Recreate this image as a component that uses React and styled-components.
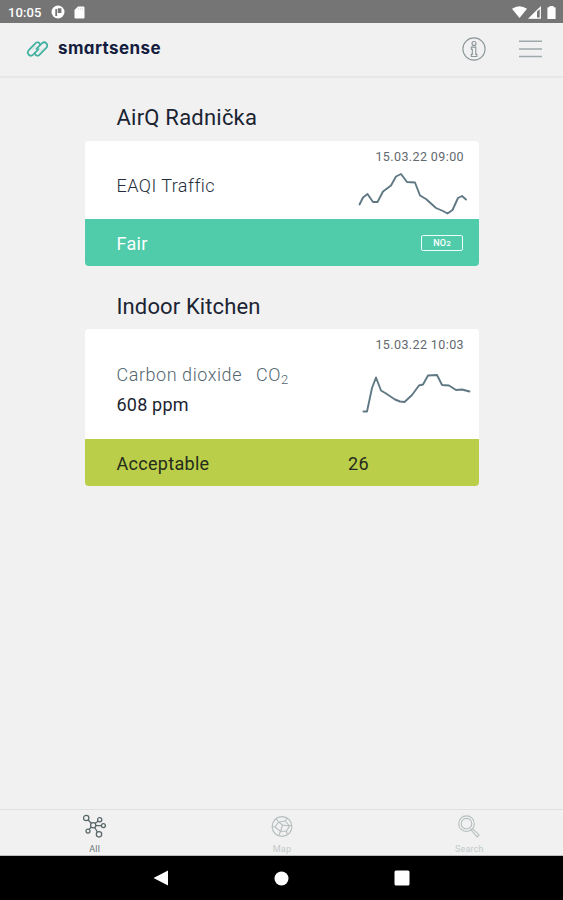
import React from "react";
import styled, { createGlobalStyle } from "styled-components";

const GlobalStyle = createGlobalStyle`
  * {
    box-sizing: border-box;
    margin: 0;
    padding: 0;
  }

  body {
    background-color: #f1f1f1;
    font-family: Roboto, "Liberation Sans", sans-serif;
    color: #1b2432;
  }
`;

const Screen = styled.div`
  display: flex;
  flex-direction: column;
  width: 100%;
  height: 100vh;
  overflow: hidden;
`;

const StatusBar = styled.div`
  display: flex;
  align-items: center;
  height: 23px;
  padding: 1px 6px 0 8px;
  background-color: #757575;
  color: #fff;
`;

const Clock = styled.span`
  width: 43px;
  font-size: 13px;
  font-weight: 500;
  letter-spacing: 0.1px;
`;

const StatusIcons = styled.div`
  display: flex;
  align-items: center;
  gap: ${(props) => props.$gap};
  margin-left: ${(props) => (props.$end ? "auto" : "0")};

  svg {
    display: block;
  }
`;

const Header = styled.header`
  display: flex;
  align-items: center;
  height: 55px;
  padding: 0 21px 1px 26px;
  border-bottom: 2px solid #e6e8e8;
`;

const BrandName = styled.span`
  margin: -2px 0 0 9px;
  font-family: Inter, sans-serif;
  font-size: 17px;
  font-weight: 700;
  font-feature-settings: "cv11";
  line-height: 20px;
  letter-spacing: 0.4px;
  color: #141c40;
`;

const HeaderActions = styled.div`
  display: flex;
  align-items: center;
  gap: 33px;
  margin-left: auto;
`;

const IconButton = styled.button`
  display: block;
  border: none;
  background: none;

  svg {
    display: block;
  }
`;

const Content = styled.main`
  flex: 1;
  padding: 24px 84px 0 85px;
`;

const Station = styled.section`
  margin-bottom: 24px;
`;

const StationName = styled.h2`
  height: 39px;
  padding-left: 31.5px;
  font-size: 22px;
  font-weight: 400;
  line-height: ${(props) => props.$leading};
  letter-spacing: ${(props) => props.$spacing};
`;

const Card = styled.article`
  border-radius: 4px;
  overflow: hidden;
`;

const CardBody = styled.div`
  display: flex;
  justify-content: space-between;
  height: ${(props) => props.$height};
  background-color: #fff;
`;

const Reading = styled.div`
  display: flex;
  flex-direction: column;
  justify-content: center;
  padding: ${(props) => props.$pad} 0 0 31.5px;
  font-size: 18px;
  line-height: 30px;
`;

const Label = styled.p`
  font-weight: 300;
  letter-spacing: ${(props) => props.$spacing || "0"};
  color: ${(props) => (props.$muted ? "#54676f" : "#252e3a")};
`;

const Formula = styled.span`
  margin-left: 14px;

  sub {
    font-size: 13px;
    line-height: 0;
    vertical-align: -3px;
  }
`;

const Value = styled.p`
  letter-spacing: 0.2px;
`;

const Trend = styled.div`
  display: flex;
  flex-direction: column;
  width: 130px;
  padding-top: 8px;

  svg {
    display: block;
  }
`;

const Timestamp = styled.time`
  height: 17px;
  padding-right: 15px;
  font-size: 12.5px;
  line-height: 16.5px;
  letter-spacing: 0.4px;
  text-align: right;
  white-space: nowrap;
  color: #62696e;
`;

const CardFooter = styled.div`
  display: flex;
  align-items: center;
  height: 47px;
  padding: 1px 16px 0 31.5px;
  font-size: 18px;
  font-weight: 400;
  letter-spacing: 0.3px;
  color: ${(props) => props.$color};
  background-color: ${(props) => props.$background};
`;

const Rating = styled.span`
  flex: 1;
`;

const Score = styled.span`
  width: 115px;
`;

const Pollutant = styled.span`
  width: 42px;
  height: 16px;
  margin-top: -1px;
  border: 1.5px solid #e9fff8;
  border-radius: 2px;
  font-size: 9px;
  font-weight: 500;
  line-height: 14px;
  letter-spacing: 0.2px;
  text-align: center;

  sub {
    font-size: 8px;
    line-height: 0;
    vertical-align: 0;
  }
`;

const TabBar = styled.nav`
  display: grid;
  grid-template-columns: repeat(3, 1fr);
  height: 47px;
  padding-left: 1px;
  border-top: 1px solid #dfe1e1;
  border-bottom: 1px solid #bdbdbd;
`;

const Tab = styled.a`
  display: flex;
  flex-direction: column;
  align-items: center;
  padding-top: 4px;
  font-size: 9px;
  line-height: 11px;
  letter-spacing: 0.2px;
  color: ${(props) => (props.$active ? "#6d7679" : "#c3caca")};

  svg {
    display: block;
    margin-bottom: 6px;
    color: ${(props) => (props.$active ? "#59666a" : "#b5bebe")};
  }
`;

const SystemNav = styled.div`
  display: flex;
  justify-content: center;
  align-items: center;
  gap: 105px;
  height: 44px;
  background-color: #000;

  svg {
    display: block;
  }
`;

const Sparkline = ({ height, points }) => (
  <svg width="130" height={height} viewBox={`0 0 130 ${height}`} fill="none">
    <polyline
      points={points}
      stroke="#5f7884"
      strokeWidth="1.9"
      strokeLinejoin="round"
      strokeLinecap="round"
    />
  </svg>
);

const LogoIcon = () => (
  <svg width="23" height="18" viewBox="0 0 23 18" fill="none">
    <g stroke="#3fb09f" strokeWidth="1.7" strokeLinecap="round" strokeLinejoin="round">
      <path d="M14 4.6C13.6 2 11.2 1.6 9.6 3.2L3 9.8C-.2 13.4 3.8 17.6 7.2 14.6L12.6 9.2" />
      <path d="M9 13.4C9.4 16 11.8 16.4 13.4 14.8L20 8.2C23.2 4.6 19.2.4 15.8 3.4L10.4 8.8" />
      <path d="M10 5.8 6 9.8M13 12.2 17 8.2" strokeWidth="0.6" opacity="0.4" />
    </g>
  </svg>
);

const InfoIcon = () => (
  <svg width="24" height="24" viewBox="0 0 24 24" fill="none">
    <g stroke="#8b9699" strokeWidth="1.1">
      <circle cx="12" cy="12" r="11.1" />
      <circle cx="12" cy="6.5" r="2" />
      <path d="M9.3 10.1h4.5v7.3h1v2.1H9.3v-2.1h1v-5.2h-1z" />
    </g>
  </svg>
);

const MenuIcon = () => (
  <svg width="23" height="18" viewBox="0 0 23 18" fill="none">
    <path d="M0 1.3h23M0 8.9h23M0 16.4h23" stroke="#a0a9ab" strokeWidth="1.5" />
  </svg>
);

const NetworkIcon = () => (
  <svg width="24" height="24" viewBox="0 0 24 24" fill="none">
    <g stroke="currentColor" strokeWidth="1.25">
      <circle cx="3.2" cy="4" r="2.7" />
      <circle cx="16.7" cy="5.7" r="2.1" />
      <circle cx="20.4" cy="11.6" r="2" />
      <circle cx="16" cy="20.3" r="2.7" />
      <circle cx="5" cy="17" r="2" />
      <circle cx="10.2" cy="11.2" r="2.6" />
      <path d="m5.2 6 3 3.2M12.2 9.2l3-2M12.9 11.5h5.3M11.6 13.5l2.8 4.3M8.2 13l-2 2.3" />
    </g>
  </svg>
);

const GlobeIcon = () => (
  <svg width="24" height="24" viewBox="0 0 24 24" fill="none">
    <g stroke="currentColor" strokeWidth="1.1">
      <circle cx="12" cy="12.5" r="9.9" />
      <path d="M6 4.5 8.5 8 15 7l2.5-3M8.5 8 5 13l-2.5-.5M15 7l4.5 5-3 5-6 .5L5 13M19.5 12l2-1M16.5 17l.5 3M10.5 17.5 9 21M8.5 8l4 3 7 1M12.5 11l-2 6.5" />
    </g>
  </svg>
);

const SearchIcon = () => (
  <svg width="24" height="24" viewBox="0 0 24 24" fill="none">
    <g stroke="currentColor" strokeWidth="1.1">
      <circle cx="9.5" cy="9.7" r="7.8" />
      <circle cx="9.5" cy="9.7" r="5.3" />
      <path d="m14 15.9 1.5-1.5 6.6 6.5-2 2z" />
    </g>
  </svg>
);

const App = () => {
  return (
    <Screen>
      <GlobalStyle />
      <StatusBar>
        <Clock>10:05</Clock>
        <StatusIcons $gap="9px">
          <svg width="14" height="14" viewBox="0 0 14 14">
            <circle cx="7" cy="7" r="6.5" fill="#fff" />
            <path d="M5.2 11V4.1M7.7 4.1h1.8v3.1H7.7z" stroke="#757575" strokeWidth="1.8" fill="none" />
          </svg>
          <svg width="11" height="13" viewBox="0 0 11 13">
            <path d="M4 .5h5.2q1.3 0 1.3 1.3v9.4q0 1.3-1.3 1.3H1.8Q.5 12.5.5 11.2V4z" fill="#fff" />
            <path d="M4.5 2v2M6.5 2v2M8.5 2v2" stroke="#d5d5d5" strokeWidth=".7" />
          </svg>
        </StatusIcons>
        <StatusIcons $gap="1px" $end>
          <svg width="15" height="12" viewBox="0 0 15 12">
            <path d="M0 2.8Q7.5-2.5 15 2.8L7.5 12z" fill="#fff" />
          </svg>
          <svg width="14" height="13" viewBox="0 0 14 13">
            <path d="M12.3 1.5v10.7H1.4z" fill="none" stroke="#fff" strokeWidth="1.2" />
            <path d="M9 4.7v7.5H1.4z" fill="#fff" />
          </svg>
          <svg width="14" height="13" viewBox="0 0 14 13">
            <path d="M6.5 0h4v1.3H12q.6 0 .6.6v10.5q0 .6-.6.6H5q-.6 0-.6-.6V1.9q0-.6.6-.6h1.5z" fill="#fff" />
          </svg>
        </StatusIcons>
      </StatusBar>

      <Header>
        <LogoIcon />
        <BrandName>smartsense</BrandName>
        <HeaderActions>
          <IconButton aria-label="Info">
            <InfoIcon />
          </IconButton>
          <IconButton aria-label="Menu">
            <MenuIcon />
          </IconButton>
        </HeaderActions>
      </Header>

      <Content>
        <Station>
          <StationName $leading="32px" $spacing="0.22px">
            AirQ Radnička
          </StationName>
          <Card>
            <CardBody $height="78px">
              <Reading $pad="11px">
                <Label $spacing="0.45px">EAQI Traffic</Label>
              </Reading>
              <Trend>
                <Timestamp>15.03.22 09:00</Timestamp>
                <Sparkline
                  height={53}
                  points="10.5,38.5 14,31.5 18.5,28 24,36 28.5,36 34,25.5 42,19.5 47,10.5 52,8 58,16 66,16.5 71,29.5 77,33 87,42 94,45 98.5,47.5 103.5,44 109,32 113,30 117,33.5"
                />
              </Trend>
            </CardBody>
            <CardFooter $color="#fff" $background="#51ccab">
              <Rating>Fair</Rating>
              <Pollutant>
                NO<sub>2</sub>
              </Pollutant>
            </CardFooter>
          </Card>
        </Station>

        <Station>
          <StationName $leading="34px" $spacing="0.12px">
            Indoor Kitchen
          </StationName>
          <Card>
            <CardBody $height="110px">
              <Reading $pad="12px">
                <Label $muted $spacing="0.55px">
                  Carbon dioxide
                  <Formula>
                    CO<sub>2</sub>
                  </Formula>
                </Label>
                <Value>608 ppm</Value>
              </Reading>
              <Trend>
                <Timestamp>15.03.22 10:03</Timestamp>
                <Sparkline
                  height={80}
                  points="14.5,57.5 18,57.5 23,34 27,23.5 32,36.5 37,39.5 46,45.5 51,47.5 55.5,48 63,41 70,31.5 74,30.5 79,21.5 88,21 93,31 100,31.5 107,36 113,35.5 120.5,37.5"
                />
              </Trend>
            </CardBody>
            <CardFooter $color="#222b1b" $background="#bace49">
              <Rating>Acceptable</Rating>
              <Score>26</Score>
            </CardFooter>
          </Card>
        </Station>
      </Content>

      <TabBar>
        <Tab $active>
          <NetworkIcon />
          All
        </Tab>
        <Tab>
          <GlobeIcon />
          Map
        </Tab>
        <Tab>
          <SearchIcon />
          Search
        </Tab>
      </TabBar>

      <SystemNav>
        <svg width="16" height="16" viewBox="0 0 16 16">
          <path d="M15 .5v15L.5 8z" fill="#fff" />
        </svg>
        <svg width="15" height="15" viewBox="0 0 15 15">
          <circle cx="7.5" cy="7.5" r="7" fill="#fff" />
        </svg>
        <svg width="16" height="16" viewBox="0 0 16 16">
          <rect x=".5" y=".5" width="15" height="15" rx="1.5" fill="#fff" />
        </svg>
      </SystemNav>
    </Screen>
  );
};

export default App;
